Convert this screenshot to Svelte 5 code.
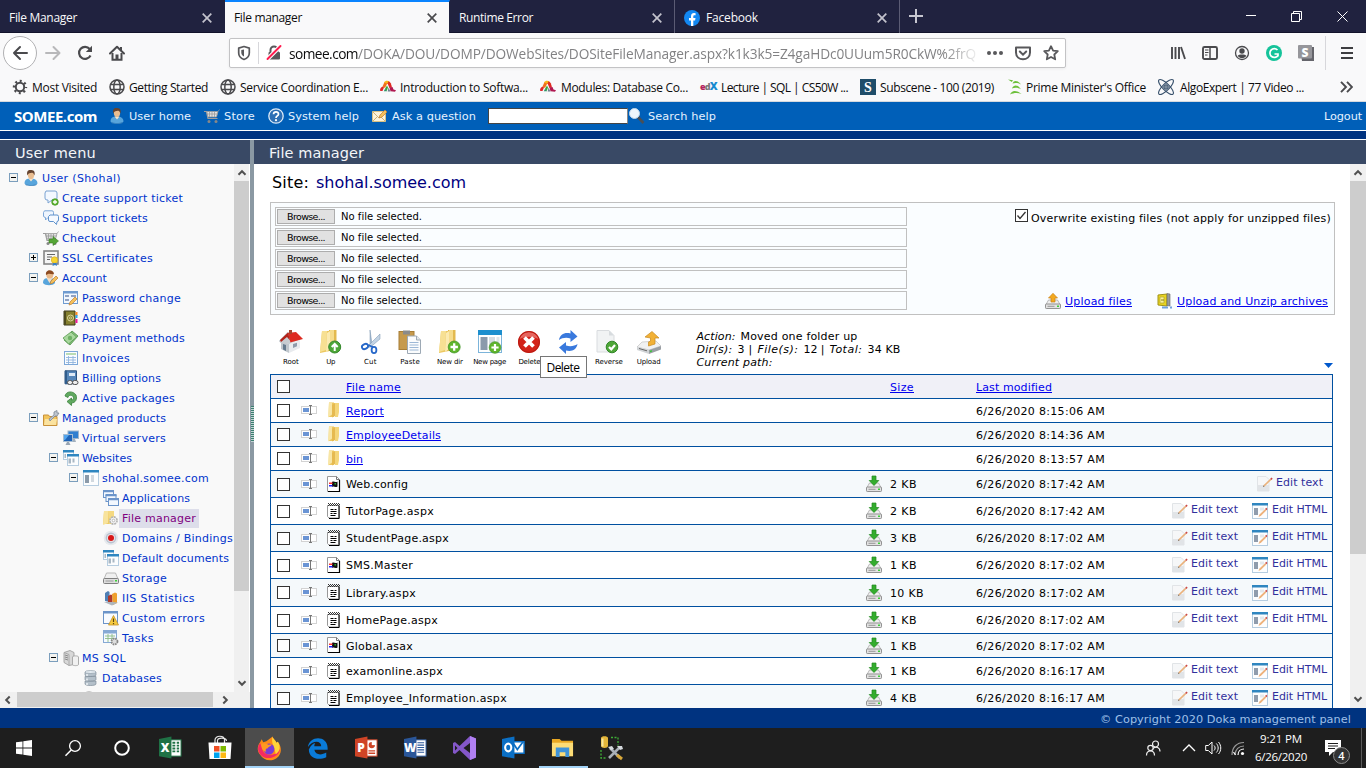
<script>
  // Spreads a label evenly over the given number of pixels.
  function fit(node, w) {
    node.style.letterSpacing = '0px';
    const natural = node.getBoundingClientRect().width;
    node.style.letterSpacing = (w - natural) / node.textContent.length + 'px';
    node.style.width = w + 'px';
  }

  const win = (x, y, w, h) =>
    `<rect x="${x + 0.5}" y="${y + 0.5}" width="${w - 1}" height="${h - 1}" fill="#fcfdfe" stroke="#b6cde0"/><rect x="${x}" y="${y}" width="${w}" height="2.500" fill="#2f86c0"/>`;
  const pencil = (x, y) =>
    `<path d="M${x} ${y + 7}l1-3 5-5 2 2-5 5z" fill="#f5c15c" stroke="#bb7d33" stroke-width=".7"/>`;
  const plus = (x, y, r) =>
    `<circle cx="${x}" cy="${y}" r="${r}" fill="#5fb52c" stroke="#3c9024" stroke-width=".7"/><path d="M${x - r * 0.62} ${y}h${r * 1.24}M${x} ${y - r * 0.62}v${r * 1.24}" stroke="#fff" stroke-width="${r * 0.38}"/>`;
  const cart =
    '<path d="M0 3.500h2.500l1.500 7h9.500" fill="none" stroke="#9d9d9d" stroke-width="1.200"/><path d="M2.800 3.500H14l-1.500 5.500H4z" fill="#e3e3e3" stroke="#999" stroke-width=".8"/><path d="M5.500 4v5M8 4v5M10.500 4v5M3.500 6h10M14 3.500l1.500-2" stroke="#999" stroke-width=".8" fill="none"/><circle cx="5" cy="13.500" r="1.500" fill="#888"/><circle cx="12" cy="13.500" r="1.500" fill="#888"/>';
  const head =
    '<path d="M1.500 13.500c0-4 2.500-5 6-5s7 1 7 5c-2 2.800-11 2.800-13 0z" fill="#58a5dc"/><path d="M2.500 14c3 1.500 8 1.500 11 0v1c-3 1.200-8 1.200-11 0z" fill="#3b82bd"/><path d="M5.500 8.500l2.500 3 2.500-3z" fill="#f6e4cc"/><ellipse cx="8" cy="5" rx="3.100" ry="4" fill="#e9bd90"/><path d="M4.300 5.500C3.200 0 6.500-.3 8 .1c3.500-.3 4.300 3 3.400 5.400-.6-1-.4-2.500-2-2.800-2 .2-4 0-5.100 2.800z" fill="#65432f"/>';
  const folder24 =
    '<path d="M3 1h8v20l-10 2z" fill="#ecc861"/><path d="M3 1h5l-1 19-6 2z" fill="#f7e093"/><path d="M10 0h7.500v14l-1 7H9z" fill="#e3b94e"/><path d="M11 0h4v15l-4 4z" fill="#f6dc8c"/><path d="M8 3l3-2v18l-4 3z" fill="#fbeab0"/>';
  const drive =
    '<path d="M3.500 7L1 11.500h14L12.500 7z" fill="#efefef" stroke="#aaa" stroke-width=".8"/><rect x=".5" y="11" width="15" height="4.500" rx=".8" fill="#e2e2e2" stroke="#888" stroke-width=".9"/><path d="M2.500 13.300h7" stroke="#969696"/><path d="M12 12.500h2v1.500h-2z" fill="#3ccf38"/>';
  const office = (bg, letter, extra) =>
    `<rect x="12" y="4" width="11" height="17" fill="#fff" stroke="${bg}"/>${extra}<path d="M0 3L13 .5v23L0 21z" fill="${bg}"/><text x="6.400" y="16.800" text-anchor="middle" font-family="Open Sans, sans-serif" font-size="12.500" font-weight="800" fill="#fff">${letter}</text>`;
  const linesW = (c) => `<path d="M14 7h7M14 9.500h7M14 12h7M14 14.500h7M14 17h7" stroke="${c}" stroke-width="1.200"/>`;
  const flames =
    '<path d="M0 11.500c0-2 1-3.500 3-4l1 1-1.500 3.500H.5z" fill="#e0262b"/><path d="M2.500 7.500L4.500 3l3 1-2.500 5z" fill="#f0701f"/><path d="M4 3.500C5 1.500 8 1.500 9.500 2.500L8 5z" fill="#f7b41b"/><path d="M8.500 2.200c2 .3 2.800 3 3.500 6.300l-2.500.5L7.500 4.500z" fill="#e02a22"/><path d="M9.500 8.500l3-.5 1 2.500 2.500.7-1 1.500-4.500-.5z" fill="#b01850"/><path d="M5.300 9.500L7 6.500l1 2-1.500 4z" fill="#38a83a"/><path d="M3.800 12.300l1.500-3 1.400 3z" fill="#2f8f6c"/><path d="M8.500 8.500l2 4H7.700z" fill="#6f7f8c"/>';
  const globe =
    '<g fill="none" stroke="#4a4a4d" stroke-width="1.500"><circle cx="8" cy="8" r="7"/><ellipse cx="8" cy="8" rx="3.200" ry="7"/><path d="M1.500 5.500h13M1.500 10.500h13"/></g>';

  const icons = {
    user: head,
    cart,
    help: '<circle cx="8" cy="8" r="7.200" fill="#2d6fb4" stroke="#dce9f6" stroke-width="1.300"/><path d="M5.500 6.200c.1-3.200 5.200-3 5 0-.1 1.700-2.500 1.900-2.500 3.800" stroke="#fff" stroke-width="1.700" fill="none"/><circle cx="8" cy="12.200" r="1.100" fill="#fff"/>',
    mail: '<path d="M.5 3.500h13v10H.5z" fill="#fbf3dc" stroke="#d8c184"/><path d="M1 4l6 6 6-6M1 13l4-4M13 13L9 9" fill="none" stroke="#c9b27a"/>' + pencil(7, 3),
    mag: '<path d="M9 9l5.500 6" stroke="#4a4f55" stroke-width="2.600"/><circle cx="5.500" cy="5.500" r="5" fill="#eef6fc" stroke="#bfd5e8"/>',
    ticket: '<path d="M3 1h9a2 2 0 0 1 2 2v5a2 2 0 0 1-2 2H9l-4 3V10H4a2 2 0 0 1-2-2V3z" fill="#f3f8ff" stroke="#7aa2d2"/>' + plus(12, 12, 3.300),
    chat: '<path d="M1.500.8h7.500a1.500 1.500 0 0 1 1.500 1.500v3.500A1.500 1.500 0 0 1 9 7.500H5L2.500 10V7.500A2 2 0 0 1 .5 6V2.500z" fill="#eef5fe" stroke="#7da7d8"/><path d="M7 5h7a1.500 1.500 0 0 1 1.500 1.500v3.500A1.500 1.500 0 0 1 14 11.500l-.5 3-3-3H7a1.500 1.500 0 0 1-1.500-1.500V6.500z" fill="#f5f9ff" stroke="#5e91cc"/>',
    checkout: cart + '<path d="M6 9h4V6.500l5.500 4.500-5.500 4.500V13H6z" fill="#55a636" stroke="#397b22" stroke-width=".6"/>',
    cert: '<rect x="1" y="1" width="14" height="13" fill="#f5f5f5" stroke="#858585" stroke-width="1.600"/><path d="M4 4.500h8M4 7h5M4 9.500h3" stroke="#666" stroke-width="1.200"/><circle cx="11.500" cy="10" r="3.200" fill="#f7d52f" stroke="#d0a51c" stroke-width=".6"/><path d="M10 13h3.500l.5 3-2-1-2.500 1z" fill="#3b7fc4"/>',
    account: '<path d="M0 13c0-4 2-5 6-5s6 1 6 5c-2 3-10 3-12 0z" fill="#58a5dc"/><path d="M3.500 8l3 5 3-5z" fill="#f3dfc6"/><circle cx="6.800" cy="5" r="3.500" fill="#e9b888"/><path d="M3 5c-1-6 7.500-6 8-1C9 5 7 3 5 4z" fill="#8c4a20"/>' + pencil(7, 7),
    password: '<rect x=".5" y="1.500" width="14" height="12" fill="#f2f7fd" stroke="#6f9bd0"/><path d="M0 1h15v2.500H0z" fill="#6f9bd0"/><path d="M2 6h4M2 10h4M8 6h5" stroke="#7087b0" stroke-width="1.400"/>' + pencil(6, 8),
    addresses: '<path d="M1 1h11v14H1z" fill="#85802f" stroke="#3d3a1d"/><path d="M1 1h2v14H1z" fill="#4d4a1f"/><path d="M12.500 2h2v4h-2z" fill="#ff8a1e"/><path d="M12.500 5h2v3h-2z" fill="#2aa8f5"/><path d="M12.500 9h2v4h-2z" fill="#f0189b"/><circle cx="7.500" cy="8" r="3" fill="none" stroke="#ded9a0"/><circle cx="7.500" cy="8" r="1.100" fill="none" stroke="#ded9a0" stroke-width=".8"/>',
    money: '<path d="M1 10L9 1l6 5-8 9z" fill="#86c07b" stroke="#4e9248" stroke-width=".8"/><path d="M0 8l8-6 5.500 5-8 7z" fill="#a8d79d" stroke="#5a9c53" stroke-width=".8"/><circle cx="7" cy="8" r="2.200" fill="#6fb266"/>',
    invoice: '<rect x="1.500" y="1.500" width="13" height="13" fill="#f9fcff" stroke="#7ea8d8"/><path d="M3 3h10v2H3z" fill="#b9dcb4"/><path d="M3 7.500h10M3 10h10M3 12.500h10M5.500 6v8M10 6v8" stroke="#90b4de" stroke-width=".9"/>',
    billing: '<path d="M2 .8h11.500v13H2z" fill="#5686b8" stroke="#2c537e"/><path d="M2 .8h2v13H2z" fill="#315d8c"/><path d="M6 3h6v3H6z" fill="#dfeaf5"/><path d="M4 12.500h10" stroke="#666" stroke-width="1"/><rect x="4.500" y="10.500" width="5" height="4" rx="2" fill="#eee" stroke="#555"/><rect x="9.500" y="10.500" width="5.500" height="4" rx="2" fill="#eee" stroke="#555"/>',
    active: '<path d="M2 6C3 1 10 .5 13 5c1.500 4-.5 8-4.500 8v2.500L4 11.500 8.500 8v2c2 0 2.500-2 1.500-3.500C8.500 4.500 5.500 5 5 7.500z" fill="#61a960" stroke="#38803a" stroke-width=".8"/>',
    managed: '<path d="M.5 5h5l1 1.500H14v9H.5z" fill="#f2c45c" stroke="#c8913a"/><path d="M2 9h12l-1 6H1z" fill="#fbe3a0"/><path d="M6 9l5-4V2l3-1.500V3h2L14 6h-2l-5 5z" fill="#bfc6cf" stroke="#7b8794" stroke-width=".8"/>',
    servers: '<rect x="5" y="1" width="10.500" height="7.500" fill="#2f7fd0" stroke="#9db6cc"/><path d="M10 9h2l1 3H9z" fill="#a3b0bd"/><rect x=".5" y="4.500" width="9" height="7" fill="#1f64b8" stroke="#a7bdd1"/><path d="M1 5h5l-4 5H1z" fill="#52a5ee"/><path d="M4 12h2l1.500 3h-5z" fill="#98a5b3"/>',
    websites: win(0, 0, 11, 10) + '<path d="M1.500 4h1.500v4H1.500z" fill="#a9b8c4"/>' + win(4, 4, 12, 12) + '<path d="M5.500 8.500h2.500v5H5.500zM9.500 8.500h2v4h-2z" fill="#a9b8c4"/>',
    site: win(0, 0, 16, 16) + '<path d="M2 5h4v8H2z" fill="#8b9aa9"/><path d="M8 5h3v7H8z" fill="#d2d9df"/>',
    apps: '<g fill="#f3f8fe" stroke="#6b94c9"><rect x=".5" y=".5" width="10" height="7"/><rect x="3" y="4.500" width="10" height="7"/><rect x="5.500" y="8.500" width="10" height="7"/></g><path d="M0 1.500h11M2.500 5.500h11M5 9.500h11" stroke="#6b94c9" stroke-width="1.700"/>',
    filemgr: '<path d="M1 1h8v13H0z" fill="#edca66"/><path d="M1 1h4v12l-5 2z" fill="#f8e39c"/><path d="M5 1h6v11l-5 2z" fill="#f5d981"/><circle cx="10.500" cy="10.500" r="3.600" fill="#f3f3f3" stroke="#b3b3b3" stroke-width="1.600" stroke-dasharray="2 .8"/><circle cx="10.500" cy="10.500" r="1.300" fill="#fff" stroke="#999" stroke-width=".6"/>',
    domain: '<circle cx="8" cy="8" r="7.300" fill="#e6e9ed"/><circle cx="8" cy="8" r="5.400" fill="#b8c2d0"/><circle cx="8" cy="8" r="4" fill="#e9e3e6"/><circle cx="8" cy="8" r="3" fill="#d81818"/>',
    storage: '<path d="M3.500 3L1 9h14L12.500 3z" fill="#f0f0f0" stroke="#aaa" stroke-width=".8"/><rect x=".5" y="8.500" width="15" height="5" rx="1" fill="#ddd" stroke="#7f7f7f"/><path d="M2.500 11h8" stroke="#9a9a9a"/><path d="M12 10h2v1.500h-2z" fill="#3ccf38"/>',
    stats: '<path d="M2 3l3-2 1.500 1v10L2 11z" fill="#4f7fb5"/><path d="M5 6l3-1.500 1.500 1V14L5 12.500z" fill="#b03a2c"/><path d="M9 4l3-1.500 2 1V13l-4 2z" fill="#efa02c"/><path d="M1 12l8 3.500 6-3-6-.5z" fill="#aeb6be"/>',
    errors: '<rect x=".5" y="1.500" width="14" height="12" fill="#f8fbff" stroke="#6b94c9"/><path d="M0 1h15v2.500H0z" fill="#6b94c9"/><path d="M10.500 5.500l5 9.500h-10z" fill="#f6ca3e" stroke="#c5922a" stroke-width=".8"/><path d="M10.500 8.500v3.500M10.500 13v1.200" stroke="#5c430f" stroke-width="1.200"/>',
    tasks: '<rect x=".5" y=".5" width="13" height="12" fill="#f5f9fe" stroke="#86a9d4"/><path d="M1 1h12v2.500H1z" fill="#86a9d4"/><path d="M2 6h10M2 8.500h10M5 4v8M9 4v8" stroke="#8dbb86" stroke-width=".9"/><circle cx="11.500" cy="11.500" r="3" fill="#ddd" stroke="#888" stroke-width="1.800" stroke-dasharray="1.600 .8"/>',
    mssql: '<path d="M1 2.500l6-2 4 2v12l-5 1-5-3z" fill="#d8d8d8" stroke="#989898" stroke-width=".8"/><path d="M1 2.500l5 2v11" fill="none" stroke="#aaa"/><path d="M2 5l3 1M2 7l3 1M2 9l3 1" stroke="#8a8a8a"/><path d="M9.500 7c0-1.500 6-1.500 6 0v7.500c0 1.500-6 1.500-6 0z" fill="#f1f1f1" stroke="#9a9a9a" stroke-width=".8"/>',
    db: '<g fill="#b4c0ca" stroke="#74828f" stroke-width=".6"><path d="M2 11v3c0 2 11 2 11 0v-3z"/><path d="M2 6.500v3c0 2 11 2 11 0v-3z"/><path d="M2 2v3c0 2 11 2 11 0V2z"/></g><ellipse cx="7.500" cy="2" rx="5.500" ry="1.500" fill="#e3eaf0" stroke="#8493a0" stroke-width=".6"/><path d="M4 4v2M4 8.500v2M4 13v2" stroke="#edf2f6" stroke-width="1.500"/>',
    disc: '<circle cx="6" cy="8.500" r="6.500" fill="#eee" stroke="#b5b5b5" stroke-width="1.500"/>',
    rename: '<rect x=".5" y="4.500" width="15" height="7" fill="#fff" stroke="#d3d3d3"/><path d="M2 6h6v4H2z" fill="#6a94d4"/><path d="M8 3.500h3M8 12.500h3M9.500 4v8" stroke="#777" stroke-width="1"/>',
    folder: '<path d="M2 .5h5v14.500H1.500z" fill="#edc75f"/><path d="M2 .5h3v12l-4 3z" fill="#f8e6a6"/><path d="M7 1h5v9l-1 5H8z" fill="#f4d67a"/><path d="M5 3l3-2v13l-3 1.500z" fill="#e6ba50"/>',
    conf: '<path d="M.5.500h9l3 3v12H.5z" fill="#fff" stroke="#999"/><path d="M9.500.5v3h3" fill="none" stroke="#777"/><path d="M12.500 4v11.500H1" fill="none" stroke="#000" stroke-width="1.200"/><path d="M5 6c2-1.500 3 1 5.500-.5v5C8 12 7 9.500 5 11z" fill="#111"/><path d="M2 6.500h3.500V8H2z" fill="#f33"/><path d="M2 9h3.500v1.500H2z" fill="#22f"/><path d="M7.500 7h1.500v1.500H7.500z" fill="#3a3"/>',
    note: '<path d="M.5 2.500h11v12.500H2L.5 13.500z" fill="#fff" stroke="#999"/><path d="M12.200 2.500V15.500H2" fill="none" stroke="#000"/><path d="M1 .5h11M2 1.500h11M1 2.500h11" stroke="#333" stroke-dasharray="1 1"/><path d="M3.500 6.500h3M7.500 6.500h2M3.500 8.500h6M3.500 10.500h2M6.500 10.500h3M3.500 12.500h5" stroke="#000"/>',
    download: drive + '<path d="M6 0h4v4.500h2.800L8 9.500 3.200 4.500H6z" fill="#33ad2d" stroke="#1f861c" stroke-width=".7"/>',
    upload: drive + '<path d="M6 9h4V5h2.500L8 .3 3.500 5H6z" fill="#f3a91f" stroke="#c9821b" stroke-width=".7"/>',
    unzip: '<path d="M1 2l9-1v12l-9-1z" fill="#e8d420" stroke="#a0921a"/><path d="M3 4h4v6H3z" fill="#f9f29a" stroke="#b0a030" stroke-width=".7"/><path d="M4 7h3" stroke="#8a7c10"/><path d="M10 .5L13 1v12l-3-.5z" fill="#969b9e" stroke="#666" stroke-width=".6"/><path d="M5 14.500h6M13 14.500h2" stroke="#6ea0dc" stroke-width="2"/>',
    edit: '<path d="M.5.5H9l3 3V15H.5z" fill="#f6f7f8" stroke="#e1e4e7"/><path d="M1 9h11v6H1z" fill="#e1e4e7"/><path d="M6 11l.7-2 6.300-6L14.300 4 8 10z" fill="#eab27c"/><path d="M13 3l1.500-1.500L15.700 2.700l-1.300 1.300z" fill="#cc4a45"/><path d="M6 11l.6-1.600.9.900z" fill="#555"/>',
    html: win(0, 0, 16, 16) + '<path d="M2 5h4v7H2z" fill="#8f9cac"/><path d="M8 4.500h4v3H8z" fill="#e3e8ec"/><path d="M6.500 14l1-2.500 5.500-5.300 1.300 1.300L9 12.700z" fill="#eeb27b"/><path d="M13 6L14.300 4.800 15.500 6l-1.200 1.200z" fill="#cc4a45"/>',
    // large toolbar icons
    root: '<path d="M2 11l8 3v9l-8-4z" fill="#bfc6cc"/><path d="M10 14l11-4v8l-11 5z" fill="#e8ebee"/><path d="M0 11L9 2l13 7-12 5-8-1z" fill="#c8ccd0"/><path d="M8 3l9-1 7 7-13 3.500z" fill="#dd2a20"/><path d="M0 11l8.500-9 3 10.500-1 1.500-3-5-6 4z" fill="#c9ced3"/><path d="M1 10l8-7.500 2 8-3-3.500-6 5z" fill="#b3241b"/><path d="M10 0h3v4h-3z" fill="#a5452f"/><path d="M4 14l3 1v6l-3-1.500z" fill="#667b8e"/><path d="M14 14l4-1.200v3.500L14 18z" fill="#8e9bab"/>',
    up: folder24 + '<circle cx="15.700" cy="17" r="6" fill="#4da637" stroke="#33872a"/><path d="M15.700 21v-6M12.700 17l3-3 3 3" stroke="#fff" stroke-width="2" fill="none"/>',
    cut: '<path d="M12 0l2 14-2 3z" fill="#a9c0d8" stroke="#7590ad" stroke-width=".5"/><path d="M22 4L10 16l2 1.500L22 9z" fill="#c3d4e5" stroke="#7590ad" stroke-width=".5"/><ellipse cx="7" cy="16.500" rx="3.200" ry="2.400" fill="none" stroke="#2667c8" stroke-width="1.800" transform="rotate(-25 7 16.500)"/><ellipse cx="16" cy="20" rx="2.400" ry="3.200" fill="none" stroke="#2667c8" stroke-width="1.800"/><path d="M10 15l5 2" stroke="#2667c8" stroke-width="1.800"/>',
    paste: '<rect x="1" y="1.500" width="15" height="18" fill="#c69a4d" stroke="#a87e36"/><path d="M5 .5h7v4H5z" fill="#8b8b8b"/><path d="M9.500 6h9l4 4v13.500h-13z" fill="#fbfcfd" stroke="#9da9b5"/><path d="M18.500 6v4h4" fill="#e2e8ed" stroke="#9da9b5"/><path d="M11.500 12.500h9M11.500 15h9M11.500 17.500h9M11.500 20h9" stroke="#9db8d6"/>',
    newdir: folder24 + plus(16.200, 17, 6),
    newpage: '<rect x=".5" y=".5" width="23" height="22" fill="#fff" stroke="#7cb4da"/><path d="M0 0h24v5H0z" fill="#1d8fce"/><path d="M2.500 7h7v13h-7z" fill="#8b9aab"/><path d="M11 7h6v8h-6z" fill="#d6dde3"/><path d="M18.500 7h3v7h-3z" fill="#dfe5e9"/>' + plus(17, 17.500, 5.800),
    delete: '<circle cx="12" cy="12" r="11" fill="#d32219"/><path d="M2.500 9a10 10 0 0 1 19 0c-6-3-13-3-19 0z" fill="#e6655e"/><circle cx="12" cy="12" r="10.400" fill="none" stroke="#b81b12"/><path d="M7.500 7.500l9 9M16.500 7.500l-9 9" stroke="#fff" stroke-width="3.800"/>',
    refresh: '<path d="M2 10C3 4 8 2 13.500 3.500V0L20.500 6.500 13.500 12V8.500C9 7 5 8 2 10z" fill="#3979dd"/><path d="M20.500 14c-1 6-6 8-11.500 6.500V24L2 17.500 9 12v3.500c4.500 1.500 8.500.5 11.500-1.500z" fill="#3979dd"/>',
    reverse: '<g transform="translate(-2 0)"><path d="M2 .5h12l5 5v16.500H2z" fill="#f1f3f4" stroke="#d9dcdf"/><path d="M14 .5v5h5z" fill="#d7dbde"/><circle cx="17" cy="17" r="5.800" fill="#4da637" stroke="#33872a"/><path d="M14 17l2.300 2.300L20 15" stroke="#fff" stroke-width="2.200" fill="none"/></g>',
    uploadbig: '<path d="M5 12L0 17l12 3 12-4-5-5z" fill="#f0f1f2" stroke="#bbb" stroke-width=".6"/><path d="M0 17l12 3v4L0 20z" fill="#d0d3d6"/><path d="M12 20l12-4v3.500L12 24z" fill="#9a9fa4"/><path d="M2 18.500l8 2.300" stroke="#666" stroke-width="1"/><path d="M13 21.500l2-.6" stroke="#3c3" stroke-width="1.500"/><path d="M8 7l7-5.500L22 8h-4v6l-6.500 2v-4l2-1V8z" fill="#f2b136" stroke="#c68a22" stroke-width=".7"/>',
    // browser
    facebook: '<circle cx="8" cy="8" r="8" fill="#1388f2"/><path d="M7 16v-5.500H5V8h2V6.200C7 4 8.300 3 10 3l1.600.2v2h-1C9.600 5.200 9.300 5.700 9.300 6.500V8h2.200l-.4 2.500H9.300V16z" fill="#fff"/>',
    back: '<path d="M15 8H2M8 2L2 8l6 6" fill="none" stroke="#4a4a4d" stroke-width="2" stroke-linecap="round" stroke-linejoin="round"/>',
    forward: '<path d="M1 8h13M8.500 2l6 6-6 6" fill="none" stroke="#b8b8ba" stroke-width="2" stroke-linecap="round" stroke-linejoin="round"/>',
    reload: '<path d="M13.500 10.500a6 6 0 1 1-.8-6.500" fill="none" stroke="#4a4a4d" stroke-width="2.200"/><path d="M15 .8V7H8.800z" fill="#4a4a4d"/>',
    home: '<path d="M1 8.500L8 1.700l7 6.800" fill="none" stroke="#4a4a4d" stroke-width="2" stroke-linecap="round" stroke-linejoin="round"/><path d="M3.500 8v6.700h9V8" fill="none" stroke="#4a4a4d" stroke-width="2"/><path d="M6.500 9.500h3V15h-3zM11 2h2v4l-2-2z" fill="#4a4a4d"/>',
    shield: '<path d="M8 1.500l5.300 1.600V8c0 3.500-2.300 5.500-5.300 6.500C5 13.500 2.700 11.500 2.700 8V3.100z" fill="none" stroke="#58585b" stroke-width="1.700" stroke-linejoin="round"/><path d="M8 4.500v7c-2-1-2.700-2.300-2.700-4V5z" fill="#58585b"/>',
    lock: '<path d="M4.500 8V5a3.500 3.500 0 0 1 7 0v3" fill="none" stroke="#58585b" stroke-width="2"/><rect x="2.500" y="7" width="11.500" height="7.500" rx="1" fill="#58585b"/><path d="M1.500 14L14.500 1" stroke="#fff" stroke-width="4"/><path d="M1.500 14L14.500 1" stroke="#ff1b4e" stroke-width="1.900" stroke-linecap="round"/>',
    dots: '<circle cx="2" cy="8" r="2" fill="#58585b"/><circle cx="8" cy="8" r="2" fill="#58585b"/><circle cx="14" cy="8" r="2" fill="#58585b"/>',
    pocket: '<path d="M1 2.500h14v5c0 9-14 9-14 0z" fill="none" stroke="#58585b" stroke-width="2" stroke-linejoin="round"/><path d="M4.800 6.500L8 9.700l3.200-3.200" fill="none" stroke="#58585b" stroke-width="2" stroke-linecap="round"/>',
    star: '<path d="M8 1.200l2.100 4.400 4.700.6-3.500 3.300.9 4.800L8 12l-4.200 2.300.9-4.800L1.200 6.200l4.700-.6z" fill="none" stroke="#58585b" stroke-width="1.800" stroke-linejoin="round"/>',
    library: '<path d="M2 2v12M5.500 2v12M9 2v12M11 2l4 12" stroke="#4a4a4d" stroke-width="1.900"/>',
    sidebar: '<rect x="1" y="2" width="14" height="12" rx="1.500" fill="none" stroke="#4a4a4d" stroke-width="1.900"/><path d="M8 2v12" stroke="#4a4a4d" stroke-width="1.500"/><path d="M3 5h3.500M3 7.500h3.500M3 10h2.500" stroke="#4a4a4d"/>',
    person: '<circle cx="8" cy="8" r="6.500" fill="none" stroke="#4a4a4d" stroke-width="1.300"/><circle cx="8" cy="6" r="2.700" fill="#4a4a4d"/><path d="M3.700 10.700c1-1.500 7.600-1.500 8.600 0C10.700 13.800 5.300 13.800 3.700 10.700z" fill="#4a4a4d"/>',
    grammarly: '<circle cx="8" cy="8" r="8" fill="#15c39a"/><path d="M11.500 5A4.400 4.400 0 1 0 12 10.500M8.500 9H12v2.500" fill="none" stroke="#fff" stroke-width="1.700"/>',
    sbox: '<path d="M2 2h14v14H4z" fill="#65656b"/><rect x="0" y="0" width="14" height="13.500" rx="1" fill="#96969b"/><text x="7" y="11.500" text-anchor="middle" font-family="Open Sans, sans-serif" font-size="12" font-weight="800" fill="#fff">S</text>',
    gear: '<circle cx="8" cy="8" r="4.200" fill="none" stroke="#4a4a4d" stroke-width="2"/><circle cx="8" cy="8" r="6" fill="none" stroke="#4a4a4d" stroke-width="2.400" stroke-dasharray="2 2.710" stroke-dashoffset="1"/>',
    globe, flames,
    edx: '<text x="0" y="11" font-family="Open Sans, sans-serif" font-size="9" font-weight="800" letter-spacing="-.8"><tspan fill="#b4245d">e</tspan><tspan fill="#777">d</tspan><tspan fill="#168bd0" font-size="11">X</tspan></text>',
    subscene: '<rect width="16" height="16" fill="#1f4d69"/><text x="8" y="13" text-anchor="middle" font-family="Liberation Serif, serif" font-size="14" font-weight="700" fill="#fff">S</text>',
    pmo: '<path d="M0 .5l5 .8L3.800 3zM4.500 4.500C6 .5 10 1.500 13 5.500 9.500 3.500 6.500 4 4.500 4.500zM4 9.500c2-4.500 6-3.500 9 .8-3.500-2-6.500-1.800-9-.8zM2 15.500c2-5 6.500-4.500 11.500-.5-4-1.500-8-1-11.500.5z" fill="#6cbf3a"/>',
    algo: '<g fill="none" stroke="#37506b" stroke-width="1.100"><ellipse cx="8" cy="8" rx="10" ry="3.300" transform="rotate(45 8 8)"/><ellipse cx="8" cy="8" rx="10" ry="3.300" transform="rotate(-45 8 8)"/></g><circle cx="8" cy="8" r="2.300" fill="#7b8c9d" stroke="#37506b"/>',
    // taskbar
    windows: '<path d="M0 2.300L6.500 1.400v6.200H0zM7.300 1.300L16 0v7.600H7.300zM0 8.400h6.500v6.200L0 13.700zM7.300 8.400H16V16l-8.700-1.300z" fill="#fff"/>',
    search: '<circle cx="10" cy="6" r="5.400" fill="none" stroke="#fff" stroke-width="1.300"/><path d="M6.200 10L.5 15.700" stroke="#fff" stroke-width="1.500"/>',
    cortana: '<circle cx="8" cy="8" r="6.800" fill="none" stroke="#fff" stroke-width="2"/>',
    excel: office('#1f7145', 'X', '<path d="M14 7h3M18.500 7H21M14 10h3M18.500 10H21M14 13h3M18.500 13H21M14 16h3M18.500 16H21" stroke="#1f7145" stroke-width="2"/>'),
    store: '<path d="M7 7V4c0-5 9.500-5 9.500 0v3M9.500 7V4.500c0-3.500 9-3 9 .5" fill="none" stroke="#e8e8e8" stroke-width="1.200"/><path d="M.5 6.500h23L22.500 23h-21z" fill="#fff"/><path d="M6 10h5.500v5.500H6z" fill="#f04e23"/><path d="M12.500 10H18v5.500h-5.500z" fill="#7db900"/><path d="M6 16.500h5.500V22H6z" fill="#00a3ee"/><path d="M12.500 16.500H18V22h-5.500z" fill="#fdb813"/>',
    firefox: '<path d="M3 6L4.500 3l1.500 3 3-1 6-4.500c0 2 3 3.500 3.500 6l1.500-1c4 5 4 12-1 15.500-5 4-13 2.500-16-3C-.5 14 .5 9 3 6z" fill="#ff8a16"/><path d="M1 13c1 6 6 9 12 8 5-1 9-4 9-9-1 4-5 6-9 6-5 0-8-3-8-7L3 7c-2 2-2 4-2 6z" fill="#f52a62"/><path d="M15 .5c0 2 3 3.500 3.500 6l1.500-1c3 5 2 9-2 12-1-7-5-11-3-17z" fill="#ffd43a"/><circle cx="11.500" cy="12.500" r="5.200" fill="#7b3bd6"/><path d="M4 8c2-2 5-1 7 .5l3-.5c0 2-3 2-4 4-2 0-2 2-1 3-3 0-5-3-5-7z" fill="#ff9a20"/>',
    edge: '<path d="M1 11C2.500-2 22.500-2 22.500 12v2H8c1 6 8 6 13 3v5C12 26 2 23 2 13.500 4 9 7 7 9 6.500 8 8 8 9.500 8 10h7.500c0-7-10-6.500-14.500 1z" fill="#0a7bd8"/>',
    ppt: office('#cf4426', 'P', '<circle cx="17.500" cy="9.500" r="3.300" fill="#cf4426"/><path d="M17.500 9.500V5H22v4.500z" fill="#fff"/><path d="M14 15.500h7M14 18h7" stroke="#cf4426" stroke-width="1.500"/>'),
    word: office('#2a5699', 'W', linesW('#2a5699')),
    vs: '<path d="M17 0l6 2.500v19L17 24 6.500 14 2 18l-2-1V7l2-1 4.500 4z" fill="#8457c9"/><path d="M17 0l6 2.500v19L17 24z" fill="#b180f2"/><path d="M2 9.500L4.500 12 2 14.500zM17 7v10l-6.500-5z" fill="#1e1e1e"/>',
    outlook: '<path d="M10 6h13v12H10z" fill="#fff" stroke="#0b6fc4" stroke-width="1.500"/><path d="M12 8l4 6 6-8" fill="none" stroke="#0b6fc4" stroke-width="1.800"/><path d="M0 3L13 .5v23L0 21z" fill="#0b6fc4"/><ellipse cx="6.500" cy="12" rx="3.200" ry="4" fill="none" stroke="#fff" stroke-width="2.200"/>',
    explorer: '<path d="M1 3h8l2 2h12v16H1z" fill="#e8a722"/><path d="M1 7h22v14H1z" fill="#fcdc76"/><path d="M5 12h14v10h-4v-5H9v5H5z" fill="#3f93d8"/>',
    tools: '<path d="M1 2c0-2.500 7-2.500 7 0v8c0 2.500-7 2.500-7 0z" fill="#e3b53a"/><path d="M2.500 2.500v8" stroke="#f8e69e" stroke-width="2"/><path d="M11 1.500h7v8M1 14v8h6" fill="none" stroke="#3fae37" stroke-width="1.300" stroke-dasharray="2 1.500"/><path d="M9 22l10-10M20 22L10 12" stroke="#a9b0b6" stroke-width="2.600"/><path d="M8 11l4-1 2 3-3 1zM17 10l3 4 3-1-1-3z" fill="#d6dade"/><path d="M17 19l5 4" stroke="#d8a83a" stroke-width="3"/>',
    people: '<g fill="none" stroke="#eee" stroke-width="1.200"><circle cx="10.500" cy="4" r="3"/><path d="M8 8.500c3-2.500 7-1 7 3"/><circle cx="5.500" cy="8" r="2.700"/><path d="M1.500 15.500c0-6 8-6 8 0"/></g>',
    caret: '<path d="M2 11l6-6 6 6" fill="none" stroke="#fff" stroke-width="1.300"/>',
    speaker: '<path d="M.7 5.500h2.600L7 2v12l-3.700-3.500H.7z" fill="none" stroke="#fff"/><path d="M9 5.500c1.500 1.500 1.500 3.500 0 5M11.300 3.500c2.500 2.500 2.500 6.500 0 9M13.500 2c3 3.500 3 8.500 0 12" fill="none" stroke="#fff"/>',
    wifi: '<g fill="none" stroke="#9a9a9a" stroke-width="1.200"><path d="M2 15C2 7 7 2.500 14 2.500"/><path d="M5 15c0-5.500 4-9 9-9"/></g><g fill="none" stroke="#fff" stroke-width="1.200"><path d="M8 15c0-3.500 2.500-6 6-6M3.500 12l2 3"/></g><circle cx="12.500" cy="13.500" r="1.600" fill="#fff"/>',
  };

  const tabs = [
    { t: 'File Manager', w: 68 },
    { t: 'File manager', w: 68, active: true },
    { t: 'Runtime Error', w: 74 },
    { t: 'Facebook', w: 52, icon: 'facebook' },
  ];
  // slot: width up to the next bookmark, gap: icon to label
  const bookmarks = [
    { i: 'gear', t: 'Most Visited', w: 65, slot: 97, gap: 4 },
    { i: 'globe', t: 'Getting Started', w: 79, slot: 111, gap: 4 },
    { i: 'globe', t: 'Service Coordination E...', w: 128, slot: 160, gap: 4 },
    { i: 'flames', t: 'Introduction to Softwa...', w: 128, slot: 160, gap: 4 },
    { i: 'flames', t: 'Modules: Database Co...', w: 127, slot: 160, gap: 5 },
    { i: 'edx', t: 'Lecture | SQL | CS50W ...', w: 127, slot: 160, gap: 5 },
    { i: 'subscene', t: 'Subscene - 100 (2019)', w: 114, slot: 148, gap: 4 },
    { i: 'pmo', t: "Prime Minister's Office", w: 120, slot: 150, gap: 2 },
    { i: 'algo', t: 'AlgoExpert | 77 Video ...', w: 124, slot: 170, gap: 6 },
  ];
  const links = [
    { i: 'user', t: 'User home', w: 62, slot: 95 },
    { i: 'cart', t: 'Store', w: 31, slot: 64 },
    { i: 'help', t: 'System help', w: 71, slot: 104 },
    { i: 'mail', t: 'Ask a question', w: 84, slot: 117 },
  ];
  const tree = [
    [0, '-', 'user', 'User (Shohal)', 79],
    [1, '', 'ticket', 'Create support ticket', 121],
    [1, '', 'chat', 'Support tickets', 86],
    [1, '', 'checkout', 'Checkout', 54],
    [1, '+', 'cert', 'SSL Certificates', 91],
    [1, '-', 'account', 'Account', 45],
    [2, '', 'password', 'Password change', 99],
    [2, '', 'addresses', 'Addresses', 59],
    [2, '', 'money', 'Payment methods', 103],
    [2, '', 'invoice', 'Invoices', 48],
    [2, '', 'billing', 'Billing options', 79],
    [2, '', 'active', 'Active packages', 93],
    [1, '-', 'managed', 'Managed products', 104],
    [2, '', 'servers', 'Virtual servers', 84],
    [2, '-', 'websites', 'Websites', 50],
    [3, '-', 'site', 'shohal.somee.com', 107],
    [4, '', 'apps', 'Applications', 68],
    [4, '', 'filemgr', 'File manager', 74],
    [4, '', 'domain', 'Domains / Bindings', 111],
    [4, '', 'websites', 'Default documents', 107],
    [4, '', 'storage', 'Storage', 45],
    [4, '', 'stats', 'IIS Statistics', 73],
    [4, '', 'errors', 'Custom errors', 83],
    [4, '', 'tasks', 'Tasks', 32],
    [2, '-', 'mssql', 'MS SQL', 44],
    [3, '', 'db', 'Databases', 60],
    [3, '', 'disc', '', 0],
  ];
  const tools = [
    ['root', 'Root', 16], ['up', 'Up', 9], ['cut', 'Cut', 13], ['paste', 'Paste', 20], ['newdir', 'New dir', 26],
    ['newpage', 'New page', 33], ['delete', 'Delete', 22], ['refresh', '', 0], ['reverse', 'Reverse', 28], ['uploadbig', 'Upload', 24],
  ];
  const rows = [
    { i: 'folder', n: 'Report', w: 38, d: '8:15:06', h: 24 },
    { i: 'folder', n: 'EmployeeDetails', w: 95, d: '8:14:36', h: 24 },
    { i: 'folder', n: 'bin', w: 17, d: '8:13:57', h: 24 },
    { i: 'conf', n: 'Web.config', w: 62, s: '2 KB', d: '8:17:42', h: 27, e: 1 },
    { i: 'note', n: 'TutorPage.aspx', w: 88, s: '2 KB', d: '8:17:42', h: 27, e: 2 },
    { i: 'note', n: 'StudentPage.aspx', w: 103, s: '3 KB', d: '8:17:02', h: 27, e: 2 },
    { i: 'conf', n: 'SMS.Master', w: 67, s: '1 KB', d: '8:17:02', h: 27, e: 2 },
    { i: 'note', n: 'Library.aspx', w: 70, s: '10 KB', d: '8:17:02', h: 28, e: 2 },
    { i: 'note', n: 'HomePage.aspx', w: 92, s: '1 KB', d: '8:17:02', h: 27, e: 2 },
    { i: 'conf', n: 'Global.asax', w: 67, s: '1 KB', d: '8:17:02', h: 24 },
    { i: 'note', n: 'examonline.aspx', w: 97, s: '1 KB', d: '8:16:17', h: 27, e: 2 },
    { i: 'note', n: 'Employee_Information.aspx', w: 161, s: '4 KB', d: '8:16:17', h: 27, e: 2 },
  ];
  const apps = [
    ['windows', 16, 16], ['search', 16, 16], ['cortana', 16, 16], ['excel', 24, 23], ['store', 24, 24], ['firefox', 23, 24],
    ['edge', 24, 22], ['ppt', 24, 23], ['word', 24, 23], ['vs', 24, 24], ['outlook', 24, 23], ['explorer', 24, 23], ['tools', 24, 24],
  ];
</script>

{#snippet icon(name, size = 16, box = 16)}
  <svg class="icon" width={size} height={size} viewBox="0 0 {box} {box}">{@html icons[name]}</svg>
{/snippet}
{#snippet label(t, w)}<span class="fit" use:fit={w}>{t}</span>{/snippet}
{#snippet arrow(dir)}
  <svg class="icon" width="16" height="16" viewBox="0 0 16 16"><path d="M4.500 9.700L8 6.200l3.500 3.500" transform="rotate({dir} 8 8)" fill="none" stroke="#505050" stroke-width="2" /></svg>
{/snippet}

<div class="screen">
  <div class="tabs">
    {#each tabs as tab}
      <div class="tab" class:active={tab.active}>
        {#if tab.icon}<span class="fav">{@render icon(tab.icon)}</span>{/if}
        {@render label(tab.t, tab.w)}
        <svg class="close" width="10" height="10" viewBox="0 0 10 10"><path d="M.7.7l8.600 8.600M9.300.7L.7 9.300" stroke="currentColor" stroke-width="1.700" /></svg>
      </div>
    {/each}
    <svg class="plus" width="14" height="14" viewBox="0 0 14 14"><path d="M7 0v14M0 7h14" stroke="#c6c6d0" stroke-width="2" /></svg>
    <div class="winbtns">
      <svg width="10" height="12" viewBox="0 0 10 12"><path d="M0 5.500h10" stroke="#fff" /></svg>
      <svg width="11" height="11" viewBox="0 0 11 11"><path d="M.5 2.500h8v8h-8zM2.500 2V.5h8v8H9" fill="none" stroke="#fff" /></svg>
      <svg width="11" height="11" viewBox="0 0 11 11"><path d="M.5.5l10 10M10.500.5l-10 10" stroke="#fff" /></svg>
    </div>
  </div>

  <div class="nav">
    <div class="backbtn">{@render icon('back')}</div>
    <div class="navicons">{@render icon('forward')}{@render icon('reload')}{@render icon('home')}</div>
    <div class="url">
      {@render icon('shield')}
      <i class="vsep"></i>
      {@render icon('lock')}
      <div class="addr"><b>{@render label('somee.com', 69)}</b>{@render label('/DOKA/DOU/DOMP/DOWebSites/DOSiteFileManager.aspx?k1k3k5=Z4gaHDc0UUum5R0CkW%2frQ', 618)}</div>
      <div class="urlicons">{@render icon('dots')}{@render icon('pocket')}{@render icon('star')}</div>
    </div>
    <div class="navright">
      {@render icon('library')}{@render icon('sidebar')}{@render icon('person')}{@render icon('grammarly')}{@render icon('sbox')}
    </div>
    <i class="navsep"></i>
    <svg width="12" height="12" viewBox="0 0 12 12"><path d="M0 1h12M0 6h12M0 11h12" stroke="#3e3e41" stroke-width="1.800" /></svg>
  </div>

  <div class="bookmarks">
    {#each bookmarks as b}
      <div class="bm" style:width="{b.slot}px" style:gap="{b.gap}px">{@render icon(b.i)}{@render label(b.t, b.w)}</div>
    {/each}
    <svg class="more" width="13" height="12" viewBox="0 0 13 12"><path d="M1 .8L6 6l-5 5.200M7 .8L12 6l-5 5.200" fill="none" stroke="#4a4a4d" stroke-width="1.900" /></svg>
  </div>

  <header>
    <strong>{@render label('SOMEE.com', 83)}</strong>
    {#each links as l}
      <div class="hl" style:width="{l.slot}px">{@render icon(l.i)}{@render label(l.t, l.w)}</div>
    {/each}
    <div class="field"></div>
    <div class="hl find">{@render icon('mag')}{@render label('Search help', 68)}</div>
    <div class="logout">{@render label('Logout', 38)}</div>
  </header>
  <div class="stripe"></div>

  <main>
    <section class="left">
      <h2>{@render label('User menu', 81)}</h2>
      <div class="treewrap">
        <div class="tree">
          {#each tree as [lv, tg, ic, t, w]}
            <div class="node" style:padding-left="{lv * 20 + 9}px">
              <span class="tg">
                {#if tg}<svg width="9" height="9" viewBox="0 0 9 9"><rect x=".5" y=".5" width="8" height="8" fill="#f3f3f0" stroke="#7b9ebd" /><path d={tg === '+' ? 'M2 4.500h5M4.500 2v5' : 'M2 4.500h5'} stroke="#000" /></svg>{/if}
              </span>
              {@render icon(ic)}
              {#if t}<span class="nt" class:sel={ic === 'filemgr'}>{@render label(t, w)}</span>{/if}
            </div>
          {/each}
        </div>
        <div class="vs"><span class="ar">{@render arrow(0)}</span><div class="thumb lthumb"></div><span class="ar end">{@render arrow(180)}</span></div>
      </div>
      <div class="hs"><span class="ar">{@render arrow(-90)}</span><div class="hthumb"></div><span class="ar">{@render arrow(90)}</span></div>
    </section>
    <div class="splitter"><i></i></div>
    <section class="right">
      <h2>{@render label('File manager', 95)}</h2>
      <div class="body">
        <div class="content">
          <h1>{@render label('Site:', 37)}<span class="name">{@render label('shohal.somee.com', 150)}</span></h1>
          <div class="upload">
            <div class="inputs">
              {#each Array(5) as _}
                <div class="file"><button>{@render label('Browse...', 38)}</button>{@render label('No file selected.', 81)}</div>
              {/each}
            </div>
            <div class="upright">
              <div class="over">
                <svg width="13" height="13" viewBox="0 0 13 13"><rect x=".5" y=".5" width="12" height="12" fill="#fff" stroke="#333" /><path d="M2.500 6.500L5 9.500l5.500-6.500" fill="none" stroke="#333" stroke-width="1.300" /></svg>
                {@render label('Overwrite existing files (not apply for unzipped files)', 300)}
              </div>
              <div class="uplinks">
                {@render icon('upload')}<a href="#top">{@render label('Upload files', 67)}</a>
                <span class="zip">{@render icon('unzip')}</span><a href="#top">{@render label('Upload and Unzip archives', 151)}</a>
              </div>
            </div>
          </div>
          <div class="toolbar">
            {#each tools as [ic, t, w]}
              <div class="tool">
                {@render icon(ic, 24, 24)}
                {#if t}{@render label(t, w)}{/if}
                {#if ic === 'delete'}<div class="tip">{@render label('Delete', 33)}</div>{/if}
              </div>
            {/each}
            <div class="status">
              <div><em>{@render label('Action:', 39)}</em> {@render label('Moved one folder up', 117)}</div>
              <div><em>{@render label('Dir(s):', 36)}</em> {@render label('3 |', 15)} <em>{@render label('File(s):', 41)}</em> {@render label('12 |', 21)} <em>{@render label('Total:', 33)}</em> {@render label('34 KB', 33)}</div>
              <div><em>{@render label('Current path:', 76)}</em></div>
            </div>
            <svg class="tri" width="9" height="5" viewBox="0 0 9 5"><path d="M0 0h9L4.500 5z" fill="#0058cc" /></svg>
          </div>
          <div class="table">
            <div class="row head">
              <span class="cb"></span><span class="c1"></span><span class="c2"></span>
              <span class="nm"><a href="#top">{@render label('File name', 55)}</a></span><span class="dl"></span>
              <span class="sz"><a href="#top">{@render label('Size', 24)}</a></span><span class="dt"><a href="#top">{@render label('Last modified', 76)}</a></span>
            </div>
            {#each rows as r, k}
              <div class="row" class:alt={k % 2} style:height="{r.h}px">
                <span class="cb"></span><span class="c1">{@render icon('rename')}</span><span class="c2">{@render icon(r.i)}</span>
                <span class="nm">{#if r.s}{@render label(r.n, r.w)}{:else}<a href="#top">{@render label(r.n, r.w)}</a>{/if}</span>
                <span class="dl">{#if r.s}{@render icon('download')}{/if}</span>
                <span class="sz">{#if r.s}{@render label(r.s, r.s.length > 4 ? 34 : 27)}{/if}</span>
                <span class="dt">{@render label('6/26/2020 ' + r.d + ' AM', 129)}</span>
                {#if r.e}
                  <span class="acts" class:solo={r.e === 1}>
                    {@render icon('edit')}<span class="act">{@render label('Edit text', 47)}</span>
                    {#if r.e === 2}<span class="html">{@render icon('html')}</span><span class="act">{@render label('Edit HTML', 55)}</span>{/if}
                  </span>
                {/if}
              </div>
            {/each}
          </div>
        </div>
        <div class="vs"><span class="ar">{@render arrow(0)}</span><div class="thumb rthumb"></div><span class="ar end">{@render arrow(180)}</span></div>
      </div>
    </section>
  </main>

  <footer>{@render label('© Copyright 2020 Doka management panel', 251)}</footer>

  <div class="taskbar">
    {#each apps as [name, box, size]}
      <div class="app" class:on={name === 'firefox'} class:line={name === 'firefox' || name === 'explorer'}>{@render icon(name, size, box)}</div>
    {/each}
    <div class="tray">
      {@render icon('people')}
      <span class="car">{@render icon('caret')}</span>
      <span class="spk">{@render icon('speaker')}</span>
      <span class="wf">{@render icon('wifi')}</span>
      <div class="clock">{@render label('9:21 PM', 42)}{@render label('6/26/2020', 52)}</div>
      <div class="notif">
        <svg class="icon" width="16" height="16" viewBox="0 0 16 16"><path d="M0 0h16v12H8l-4 4v-4H0z" fill="#fff" /><path d="M3 3.500h10M3 6h10M3 8.500h7" stroke="#1e1e1e" /></svg>
        <span class="badge">4</span>
      </div>
      <i class="edge"></i>
    </div>
  </div>
</div>

<style>
  :global(body) { margin: 0; overflow: hidden; }
  .screen { width: 1366px; height: 768px; display: flex; flex-direction: column; overflow: hidden; background: #fff; font: 11px/14px 'DejaVu Sans', Verdana, sans-serif; color: #000; }
  .screen * { box-sizing: border-box; }
  .fit { display: inline-block; flex: none; white-space: nowrap; }
  .icon { display: block; flex: none; overflow: visible; }

  .tabs, .nav, .bookmarks, .taskbar, .tip { font-family: 'Open Sans', 'Noto Sans', sans-serif; }
  .tabs { height: 33px; flex: none; display: flex; align-items: center; background: #20223f; border-bottom: 1px solid #12132b; font-size: 12px; line-height: 16px; color: #f9f9fa; }
  .tab { width: 225px; height: 33px; flex: none; margin-bottom: -1px; padding: 2px 12px 0 9px; display: flex; align-items: center; border-right: 1px solid #5b5c74; color: #f9f9fa; }
  .tab:first-child { border: 0; padding-right: 13px; }
  .tab.active { background: #f9f9fa; color: #0c0c0d; border-top: 2px solid #0a84ff; border-right-color: #20223f; padding-top: 0; }
  .fav { margin-right: 6px; }
  .close { margin-left: auto; color: #c3c3cd; }
  .active .close { color: #4a4a4d; }
  .plus { margin-left: 9px; }
  .winbtns { margin-left: auto; display: flex; align-items: center; gap: 35px; padding-right: 18px; }

  .nav { height: 40px; flex: none; display: flex; align-items: center; background: #f9f9fa; }
  .backbtn { width: 34px; height: 34px; margin-left: 3px; border: 1px solid #b1b1b3; border-radius: 50%; background: #fff; display: flex; align-items: center; justify-content: center; }
  .navicons { display: flex; gap: 16px; margin-left: 8px; }
  .url { width: 837px; height: 30px; margin-left: 104px; padding-left: 6px; border: 1px solid #c3c3c5; border-radius: 2px; background: #fff; box-shadow: 0 1px 3px rgba(0, 0, 0, 0.06); display: flex; align-items: center; }
  .vsep { width: 1px; height: 22px; background: #d7d7db; margin: 0 7px 0 6px; }
  .addr { width: 690px; margin-left: 7px; padding-top: 2px; overflow: hidden; white-space: nowrap; display: flex; font-size: 13.700px; line-height: 22px; color: #828284; mask-image: linear-gradient(90deg, #000 655px, transparent 692px); }
  .addr b { font-weight: 400; color: #0c0c0d; }
  .urlicons { display: flex; gap: 12px; margin-left: 8px; }
  .navright { display: flex; gap: 16px; margin-left: 104px; }
  .navsep { width: 1px; height: 34px; background: #d7d7db; margin: 0 15px 0 11px; }

  .bookmarks { height: 29px; flex: none; display: flex; align-items: center; padding-left: 12px; background: #f9f9fa; border-bottom: 1px solid #d5d9de; font-size: 12px; line-height: 16px; color: #0c0c0d; }
  .bm { flex: none; display: flex; align-items: center; }
  .bm .fit { padding-top: 2px; }
  .more { margin-left: 12px; }

  header { height: 28px; flex: none; display: flex; align-items: center; background: #005fb8; color: #e6f2ff; font-size: 11.300px; }
  header strong { width: 95px; margin-left: 14px; font: 700 15px/20px 'Open Sans', 'Noto Sans', sans-serif; color: #fff; }
  .hl { flex: none; display: flex; align-items: center; gap: 4px; }
  .hl .fit { padding-top: 1px; }
  .field { width: 140px; height: 16px; background: #fff; border: 1px solid #444; border-right-color: #888; margin-left: -1px; }
  .find { margin-left: 1px; gap: 3px; }
  .logout { margin: 2px 4px 0 auto; }
  .stripe { height: 10px; flex: none; background: #003380; border-top: 1px solid #fff; border-bottom: 1px solid #fff; }

  main { height: 568px; flex: none; display: flex; }
  h2 { height: 24px; flex: none; margin: 0; padding: 4px 15px 0; background: #394965; color: #f4f6f9; font-size: 14.500px; line-height: 18px; font-weight: 400; }
  .left { width: 250px; display: flex; flex-direction: column; background: #f9f9f9; }
  .treewrap { height: 528px; display: flex; }
  .tree { width: 234px; padding-top: 4px; overflow: hidden; color: #0033cc; }
  .node { height: 20px; display: flex; align-items: center; }
  .node .icon { margin-top: -1px; }
  .tg { width: 9px; margin-right: 5px; flex: none; }
  .tg svg { display: block; margin-top: -1px; }
  .nt { display: block; flex: none; padding: 2px 3px; height: 19px; line-height: 15px; }
  .sel { background: #dddeea; color: #80007f; }
  .vs { width: 16px; background: #f0f0f0; display: flex; flex-direction: column; flex: none; }
  .left .vs { border-right: 1px solid #fff; }
  .ar { height: 17px; flex: none; display: block; padding-top: 1px; }
  .ar.end { margin-top: auto; padding-top: 0; }
  .thumb { background: #cdcdcd; }
  .lthumb { height: 410px; }
  .rthumb { height: 373px; }
  .hs { height: 16px; width: 250px; background: #f0f0f0; display: flex; padding-bottom: 1px; }
  .hs .ar { padding-top: 0; width: 17px; }
  .hs .ar:last-child { margin-left: 4px; }
  .hthumb { width: 196px; background: #cdcdcd; }
  .splitter { width: 4px; background: #8b99a3; padding-top: 266px; }
  .splitter i { display: block; height: 36px; width: 3px; margin-left: 1px; background: repeating-linear-gradient(#3c7f70 0 1px, #c2d2d4 1px 2px); }

  .right { flex: 1; display: flex; flex-direction: column; }
  .body { height: 544px; display: flex; }
  .content { flex: 1; padding-left: 16px; overflow: hidden; }
  h1 { height: 38px; margin: 0; padding: 9px 0 0 2px; font-size: 16px; line-height: 20px; font-weight: 400; }
  .name { color: #000080; margin-left: 7px; }
  .upload { width: 1065px; height: 113px; border: 1px solid #c0c0c0; background: #fafdff; display: flex; padding: 4px 3px 0 4px; }
  .inputs { display: flex; flex-direction: column; gap: 2px; }
  .file { width: 632px; height: 19px; border: 1px solid #c0c0c0; padding-left: 1px; display: flex; align-items: center; gap: 6px; font-size: 10px; }
  button { width: 58px; height: 15px; padding: 0; border: 1px solid #adadad; background: #e1e1e1; font: 9.500px/12px 'DejaVu Sans', sans-serif; display: flex; align-items: center; justify-content: center; }
  .upright { flex: 1; display: flex; flex-direction: column; align-items: flex-end; justify-content: space-between; padding-bottom: 5px; }
  .over { display: flex; gap: 3px; padding-top: 2px; }
  .over .fit { padding-top: 3px; }
  .uplinks { display: flex; align-items: center; padding-right: 3px; }
  a { color: #0000ee; text-decoration: underline; text-underline-offset: 1px; }
  .uplinks a { margin: 2px 0 0 4px; display: flex; }
  .uplinks .fit, .row a .fit { text-decoration: underline; text-underline-offset: 1px; }
  .zip { margin-left: 25px; }

  .toolbar { width: 1063px; height: 59px; display: flex; padding: 15px 0 0 1px; }
  .tool { width: 39.750px; flex: none; display: flex; flex-direction: column; align-items: center; font-size: 7px; line-height: 10px; gap: 3px; position: relative; }
  .tip { position: absolute; z-index: 2; left: 30px; top: 26px; width: 47px; height: 22px; background: #fff; border: 1px solid #767676; font-size: 12px; line-height: 20px; padding: 1px 6px; }
  .status { margin-left: 28px; line-height: 13px; }
  .status div { display: flex; gap: 5px; height: 13px; }
  .tri { margin: 33px 0 0 auto; align-self: flex-start; }

  .table { width: 1063px; border: 1px solid #0050a0; border-bottom: 0; }
  .row { display: flex; align-items: center; padding: 0 5px 0 6px; border-bottom: 1px solid #0050a0; }
  .head { height: 24px; background: #f0f0f7; }
  .alt { background: #f5f9fb; }
  .cb { width: 13px; height: 13px; flex: none; border: 1px solid #333; background: #fff; }
  .c1 { width: 16px; margin: -1px 10px 0 11px; flex: none; }
  .c2 { width: 16px; margin: -1px 3px 0 0; flex: none; }
  .nm { width: 520px; flex: none; padding-top: 2px; }
  .dl { width: 16px; margin-right: 8px; flex: none; }
  .sz { width: 86px; flex: none; padding-top: 2px; }
  .dt { flex: none; padding-top: 2px; }
  .acts { margin-left: auto; display: flex; align-items: center; color: #31309c; }
  .solo { padding-right: 4px; }
  .act { margin: -2px 0 0 3px; }
  .html { margin-left: 14px; }
  .html + .act { margin-left: 4px; }

  footer { height: 20px; flex: none; background: #003380; color: #9fc0e8; display: flex; justify-content: flex-end; align-items: center; padding: 3px 15px 0 0; font-size: 11.300px; }
  .taskbar { height: 40px; flex: none; background: #1e1e1e; display: flex; color: #fff; }
  .app { width: 49px; flex: none; display: flex; align-items: center; justify-content: center; border-bottom: 2px solid transparent; padding: 1px 2px 0 0; }
  .app.on { background: #4c4c4c; }
  .line { border-bottom-color: #a3d3f7; }
  .tray { margin-left: auto; width: 221px; display: flex; align-items: center; }
  .car { margin-left: 20px; }
  .spk { margin-left: 8px; }
  .wf { margin-left: 9px; }
  .clock { width: 54px; margin-left: 8px; display: flex; flex-direction: column; align-items: center; font-size: 11.500px; line-height: 18px; }
  .notif { margin-left: 17px; position: relative; }
  .badge { position: absolute; left: 8px; top: 7px; width: 17px; height: 17px; border-radius: 50%; border: 1px solid #8c8c8c; background: #333; font-size: 11px; line-height: 15px; text-align: center; font-weight: 600; }
  .edge { width: 1px; height: 40px; background: #5a5a5a; margin-left: auto; margin-right: 4px; }
</style>
